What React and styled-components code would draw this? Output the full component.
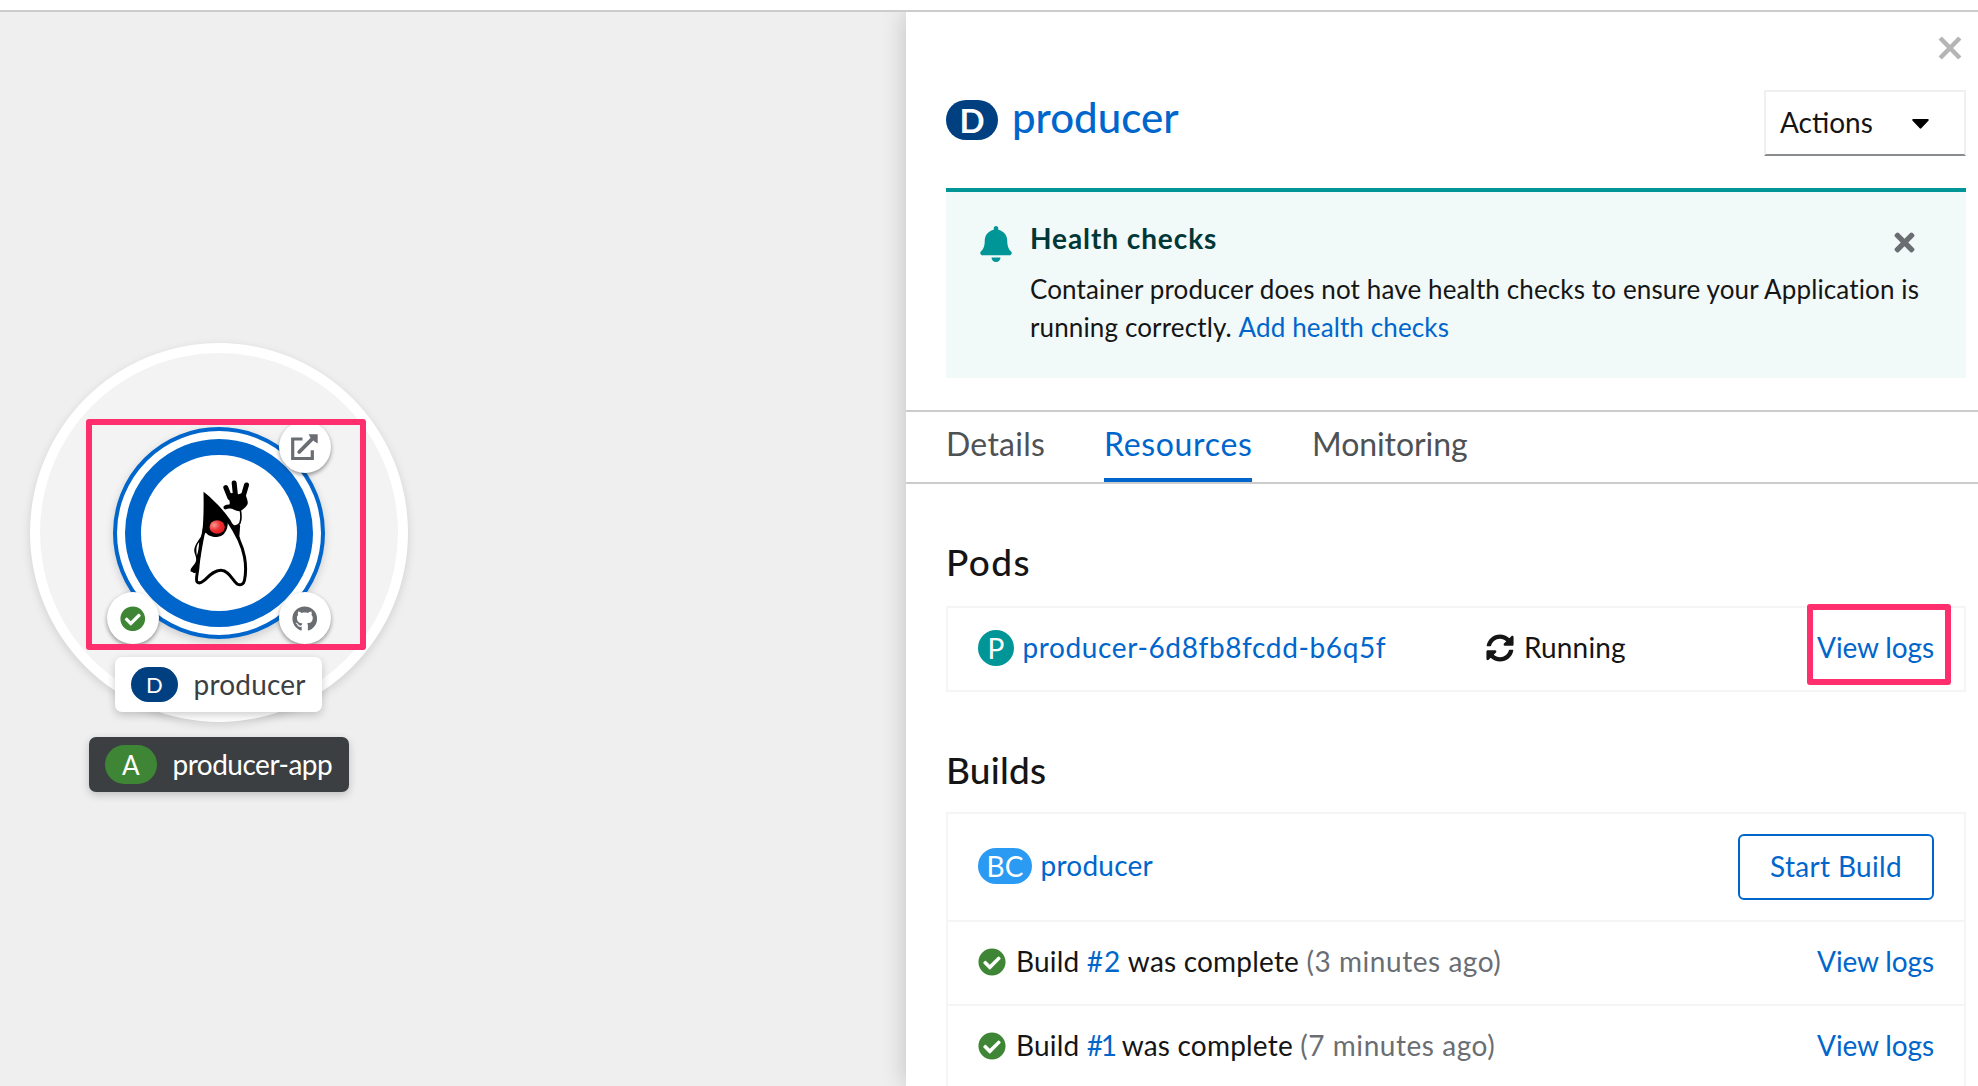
import React from 'react';
import styled, { createGlobalStyle, css } from 'styled-components';
import { FaCheckCircle, FaGithub, FaSyncAlt, FaTimes } from 'react-icons/fa';

const c = {
  text: '#151515',
  muted: '#6a6e73',
  link: '#0066cc',
  line: '#cccccc',
  soft: '#f5f5f5',
  teal: '#009596',
  green: '#3e8635',
  navy: '#004080',
  mark: '#ff2f6d',
};

const GlobalStyle = createGlobalStyle`
  *, *::before, *::after { box-sizing: border-box; }
  html, body { margin: 0; height: 100%; overflow: hidden; background: #fff; }
  body { font-family: Lato, "Liberation Sans", sans-serif; font-size: 28px; color: ${c.text}; }
  svg { display: block; flex: none; }
`;

const Page = styled.div`
  display: flex;
  flex-direction: column;
  height: 1086px;
  overflow: hidden;
`;

const Masthead = styled.header`
  flex: none;
  height: 12px;
  border-bottom: 2px solid ${c.line};
`;

const Body = styled.main`
  flex: 1;
  min-height: 0;
  display: flex;
  overflow: hidden;
`;

/* ---------- topology ---------- */

const Canvas = styled.section`
  position: relative;
  flex: 1;
  background: #efefef;
`;

const Group = styled.div`
  position: absolute;
  left: 29.5px;
  top: 331px;
  width: 378px;
  height: 379px;
  border-radius: 50%;
  border: 10.5px solid #fff;
  background: #f3f3f3;
  box-shadow: 0 3px 10px rgba(0, 0, 0, 0.13);
`;

const Node = styled.div`
  position: absolute;
  left: 112.5px;
  top: 414.5px;
  width: 212px;
  height: 212px;
  border-radius: 50%;
  border: 4px solid ${c.link};
  background: #fff;
  padding: 8px;
  box-shadow: 0 3px 8px rgba(0, 0, 0, 0.16);
`;

const PodRing = styled.div`
  display: flex;
  align-items: center;
  justify-content: center;
  width: 188px;
  height: 188px;
  border-radius: 50%;
  border: 16px solid ${c.link};
`;

const Decorator = styled.div`
  position: absolute;
  left: ${(p) => p.$x - 26}px;
  top: ${(p) => p.$y - 26}px;
  width: 52px;
  height: 52px;
  border-radius: 50%;
  background: #fff;
  box-shadow: 0 2px 4px rgba(0, 0, 0, 0.42);
  display: flex;
  align-items: center;
  justify-content: center;
  color: ${(p) => p.$color || c.muted};
  font-size: 25.5px;
`;

const NodeLabel = styled.div`
  position: absolute;
  left: ${(p) => p.$x}px;
  top: ${(p) => p.$y}px;
  width: ${(p) => p.$w}px;
  height: 55px;
  padding: 0 16px;
  display: flex;
  align-items: center;
  gap: 16px;
  border-radius: 7px;
  color: #3c3f42;
  background: #fff;
  box-shadow: 0 3px 8px rgba(0, 0, 0, 0.2);
  ${(p) =>
    p.$dark &&
    css`
      color: #fff;
      background: #3c3f42;
    `}
`;

const NodeTag = styled.span`
  display: flex;
  align-items: center;
  justify-content: center;
  width: ${(p) => p.$w}px;
  height: ${(p) => p.$h}px;
  border-radius: ${(p) => p.$h / 2}px;
  background: ${(p) => p.$color};
  color: #fff;
  font-size: ${(p) => p.$size}px;
`;

const CanvasMark = styled.div`
  position: absolute;
  left: 86px;
  top: 407px;
  width: 280px;
  height: 230.5px;
  border: 6px solid ${c.mark};
  border-radius: 3px;
`;

/* ---------- side panel ---------- */

const Panel = styled.aside`
  position: relative;
  flex: none;
  width: 1072px;
  background: #fff;
  box-shadow: 0 0 24px rgba(0, 0, 0, 0.2);
`;

const CloseRow = styled.div`
  height: 78px;
  padding: 24px 16px 0 0;
  display: flex;
  justify-content: flex-end;
`;

const TitleRow = styled.div`
  display: flex;
  align-items: flex-start;
  height: 98px;
  padding: 0 12px 0 40px;
`;

const Kind = styled.span`
  flex: none;
  display: flex;
  align-items: center;
  justify-content: center;
  width: ${(p) => p.$w}px;
  height: ${(p) => (p.$large ? 40 : 36)}px;
  border-radius: 20px;
  background: ${(p) => p.$color};
  color: #fff;
  font-size: ${(p) => (p.$large ? 33 : 28)}px;
  font-weight: ${(p) => (p.$large ? 700 : 400)};
  line-height: 36px;
  margin-top: ${(p) => (p.$large ? 10 : 0)}px;
`;

const Title = styled.h1`
  flex: 1;
  margin: 6px 0 0 14px;
  font-size: 42px;
  line-height: 42px;
  font-weight: 500;
  color: ${c.link};
`;

const ActionsToggle = styled.button`
  display: flex;
  align-items: center;
  justify-content: space-between;
  width: 202px;
  height: 66px;
  padding: 0 35px 3px 14px;
  border: 2px solid #f0f0f0;
  border-bottom-color: #8a8d90;
  background: #fff;
  color: ${c.text};
  font: inherit;

  svg { margin-top: 5px; }
`;

const Alert = styled.div`
  display: flex;
  align-items: flex-start;
  height: 190px;
  margin: 0 12px 0 40px;
  padding: 31px 40px 0 34px;
  border-top: 4px solid ${c.teal};
  background: #f2f9f9;
`;

const BellBox = styled.span`
  margin: 3px 18px 0 0;
  color: ${c.teal};
`;

const AlertBody = styled.div`
  flex: 1;
`;

const AlertHead = styled.div`
  display: flex;
  justify-content: space-between;
  height: 47px;
  padding-right: 7px;
  color: ${c.muted};

  svg { margin-top: 5px; }
`;

const AlertTitle = styled.h4`
  margin: 0;
  padding-top: 1px;
  font-size: 28px;
  line-height: 28px;
  letter-spacing: 0.92px;
  color: #003737;
`;

const AlertText = styled.p`
  margin: 0;
  font-size: 26px;
  line-height: 38px;
  letter-spacing: 0.13px;
`;

const Link = styled.a`
  color: ${c.link};
  letter-spacing: ${(p) => p.$ls || 0}px;
`;

const Tabs = styled.nav`
  display: flex;
  gap: 60px;
  height: 74px;
  margin-top: 32px;
  padding-left: 40px;
  border: solid ${c.line};
  border-width: 2px 0;
`;

const Tab = styled.button`
  width: ${(p) => p.$w}px;
  padding: 12px 0 0;
  border: 0;
  border-bottom: 4px solid ${(p) => (p.$active ? c.link : 'transparent')};
  background: none;
  color: ${(p) => (p.$active ? c.link : '#4f5255')};
  font: inherit;
  font-size: 32px;
  line-height: 40px;
  letter-spacing: ${(p) => p.$ls}px;
  text-align: left;
  white-space: nowrap;
  display: flex;
`;

const Section = styled.section`
  padding: 56px 12px 0 40px;
`;

const Heading = styled.h2`
  margin: 0 0 ${(p) => p.$gap}px;
  font-size: 37px;
  line-height: 44px;
  font-weight: 500;
  letter-spacing: ${(p) => p.$ls}px;
`;

const List = styled.div`
  border: 2px solid ${c.soft};
`;

const Row = styled.div`
  display: flex;
  align-items: center;
  justify-content: space-between;
  height: ${(p) => p.$h}px;
  padding: 0 30px 2px;

  & + & { border-top: 2px solid ${c.soft}; }
`;

const PodRow = styled(Row)`
  display: grid;
  grid-template-columns: 508px 1fr auto;
`;

const Cell = styled.div`
  display: flex;
  align-items: center;
  gap: ${(p) => p.$gap || 10}px;
`;

const Label = styled.span`
  line-height: 36px;
  padding-bottom: 2px;
  white-space: pre;
  letter-spacing: ${(p) => p.$ls || 0}px;
`;

const Ago = styled.span`
  color: ${c.muted};
  letter-spacing: 0.55px;
`;

const Marked = styled.span`
  position: relative;
  display: flex;

  &::after {
    content: '';
    position: absolute;
    inset: -25px -17px -18px -10.5px;
    border: 6px solid ${c.mark};
    border-radius: 3px;
  }
`;

const StartButton = styled.button`
  width: 196px;
  height: 66px;
  margin-top: 2px;
  padding: 0 0 3px;
  border: 2px solid ${c.link};
  border-radius: 6px;
  background: #fff;
  color: ${c.link};
  font: inherit;
  letter-spacing: 0.33px;
`;

/* ---------- drawings ---------- */

const Duke = () => (
  <svg width="160" height="170" viewBox="-4.5 23 480 510">
    <defs>
      <radialGradient id="nose" cx="0.3" cy="0.35" r="0.75">
        <stop offset="0" stopColor="#f79a90" />
        <stop offset="0.55" stopColor="#ee3034" />
        <stop offset="1" stopColor="#e01b22" />
      </radialGradient>
    </defs>
    <path
      d="M192 262C182 310 174 350 172 385C169 408 165 420 170 425C176 431 184 426 190 421C205 408 220 390 241 390C266 390 276 421 290 431C301 437 310 431 312 420C316 400 316 372 312 350C306 315 292 285 262 240Z"
      fill="#fff" stroke="#000" strokeWidth="9" strokeLinejoin="round"
    />
    <path d="M189 154C222 180 248 208 270 240L300 296L288 290L262 246C262 270 250 290 229 290C212 290 202 284 196 277C190 280 187 292 182 300L186 270C189 240 190 200 189 154Z" />
    <path d="M262 240L283 256C291 254 297 250 299 255L296 296L282 276Z" />
    <path d="M299 208C303 225 302 238 298 249C293 256 287 258 281 257" fill="none" stroke="#000" strokeWidth="5" />
    <path d="M187 277C180 296 162 310 161 330C161 340 168 348 167 360C164 374 150 382 150 391C151 397 156 393 158 397C165 400 172 396 173 388L182 330Z" />
    <path d="M176 306C168 314 166 324 169 346C173 336 175 322 176 306Z" fill="#fff" />
    <g fill="none" stroke="#000" strokeLinecap="round" strokeLinejoin="round">
      <path d="M256 142L268 172M281 128L285 166M318 134L308 168" strokeWidth="15" />
      <path d="M255 201C262 196 270 198 282 200" strokeWidth="12" />
    </g>
    <path d="M260 160L276 158L294 162L312 156C318 172 324 184 321 192C316 202 306 208 299 213C284 212 268 204 266 194C272 186 262 172 260 160Z" />
    <ellipse cx="230" cy="260" rx="23" ry="20" fill="url(#nose)" />
  </svg>
);

const ExternalIcon = () => (
  <svg width="27" height="27" viewBox="0 0 27 27">
    <path d="M11.5 5H1.7V24.5H21.3V16.3" fill="none" stroke="currentColor" strokeWidth="3.2" />
    <path d="M8.2 18L22 4.2" fill="none" stroke="currentColor" strokeWidth="3.8" strokeLinecap="round" />
    <path d="M17.6 0.3H26.7V9.4L23.5 7.4L19.4 3.4Z" fill="currentColor" />
  </svg>
);

const CloseIcon = () => (
  <svg width="24" height="24" viewBox="0 0 24 24">
    <path d="M2.2 2L21.8 22M21.8 2L2.2 22" stroke="#b5b5b5" strokeWidth="4.6" />
  </svg>
);

const BellIcon = () => (
  <svg width="32" height="36" viewBox="0 0 448 512" fill="currentColor">
    <path d="M224 512c35.32 0 63.97-28.65 63.97-64H160.03c0 35.35 28.65 64 63.97 64zm215.39-149.71c-19.32-20.76-55.47-51.99-55.47-154.29 0-77.7-54.48-139.9-127.94-155.16V32c0-17.67-14.32-32-31.98-32s-31.98 14.33-31.98 32v20.84C118.56 68.1 64.08 130.3 64.08 208c0 102.3-36.15 133.53-55.47 154.29-6 6.45-8.66 14.16-8.61 21.71.11 16.4 12.98 32 32.1 32h383.8c19.12 0 32-15.6 32.1-32 .05-7.55-2.61-15.27-8.61-21.71z" />
  </svg>
);

const CaretIcon = () => (
  <svg width="17" height="10" viewBox="0 0 17 10">
    <path d="M1.2 0H15.8C16.8 0 17 1 16.4 1.7L9.3 9.3C8.8 9.9 8.2 9.9 7.7 9.3L.6 1.7C0 1 .2 0 1.2 0Z" />
  </svg>
);

const builds = [
  { number: '#2', ago: '(3 minutes ago)', tracking: 0.9 },
  { number: '#1', ago: '(7 minutes ago)', tracking: -2.2 },
];

export default function App() {
  return (
    <Page>
      <GlobalStyle />
      <Masthead />
      <Body>
        <Canvas>
          <Group />
          <Node>
            <PodRing><Duke /></PodRing>
          </Node>
          <Decorator $x={304.5} $y={435}><ExternalIcon /></Decorator>
          <Decorator $x={132.7} $y={606.3} $color={c.green}><FaCheckCircle /></Decorator>
          <Decorator $x={304.5} $y={606.3}><FaGithub /></Decorator>
          <NodeLabel $x={115} $y={645.3} $w={207}>
            <NodeTag $w={46.5} $h={35} $size={22} $color={c.navy}>D</NodeTag>
            <Label $ls={0.2}>producer</Label>
          </NodeLabel>
          <NodeLabel $x={89} $y={725.3} $w={259.5} $dark>
            <NodeTag $w={51.5} $h={39} $size={26} $color={c.green}>A</NodeTag>
            <Label $ls={-0.5}>producer-app</Label>
          </NodeLabel>
          <CanvasMark />
        </Canvas>

        <Panel>
          <CloseRow><CloseIcon /></CloseRow>
          <TitleRow>
            <Kind $w={52} $large $color={c.navy}>D</Kind>
            <Title>producer</Title>
            <ActionsToggle>Actions<CaretIcon /></ActionsToggle>
          </TitleRow>
          <Alert>
            <BellBox><BellIcon /></BellBox>
            <AlertBody>
              <AlertHead>
                <AlertTitle>Health checks</AlertTitle>
                <FaTimes size={29} />
              </AlertHead>
              <AlertText>
                Container producer does not have health checks to ensure your Application is
                running correctly. <Link $ls={0.12}>Add health checks</Link>
              </AlertText>
            </AlertBody>
          </Alert>

          <Tabs>
            <Tab $w={98} $ls={0.25}>Details</Tab>
            <Tab $w={148} $ls={0.67} $active>Resources</Tab>
            <Tab $w={158} $ls={-0.07}>Monitoring</Tab>
          </Tabs>

          <Section>
            <Heading $gap={22} $ls={1.4}>Pods</Heading>
            <List>
              <PodRow $h={82}>
                <Cell $gap={8.5}>
                  <Kind $w={36} $color={c.teal}>P</Kind>
                  <Label><Link $ls={0.62}>producer-6d8fb8fcdd-b6q5f</Link></Label>
                </Cell>
                <Cell>
                  <FaSyncAlt size={28} />
                  <Label $ls={0.14}>Running</Label>
                </Cell>
                <Marked>
                  <Label><Link $ls={-0.12}>View logs</Link></Label>
                </Marked>
              </PodRow>
            </List>
          </Section>

          <Section>
            <Heading $gap={20} $ls={0.2}>Builds</Heading>
            <List>
              <Row $h={106}>
                <Cell $gap={8.5}>
                  <Kind $w={54} $color="#2b9af3">BC</Kind>
                  <Label><Link $ls={0.23}>producer</Link></Label>
                </Cell>
                <StartButton>Start Build</StartButton>
              </Row>
              {builds.map((b) => (
                <Row key={b.number} $h={84}>
                  <Cell>
                    <FaCheckCircle size={28} color={c.green} />
                    <Label $ls={0.2}>
                      Build <Link $ls={b.tracking}>{b.number}</Link> was complete <Ago>{b.ago}</Ago>
                    </Label>
                  </Cell>
                  <Label><Link $ls={-0.12}>View logs</Link></Label>
                </Row>
              ))}
            </List>
          </Section>
        </Panel>
      </Body>
    </Page>
  );
}
